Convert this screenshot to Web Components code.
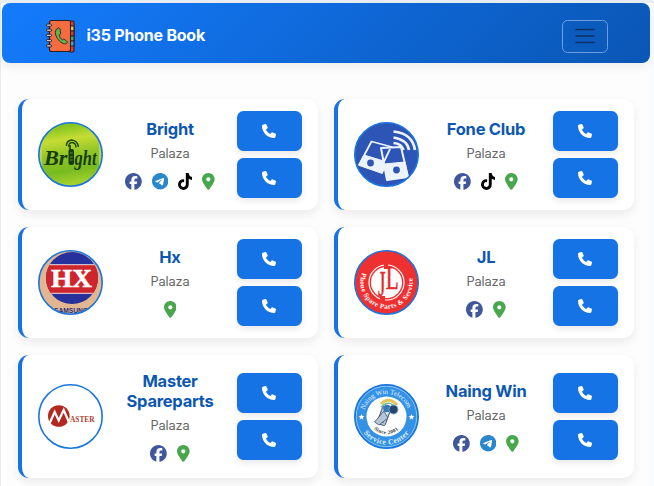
<!DOCTYPE html>
<html lang="en">
<head>
<meta charset="utf-8">
<title>i35 Phone Book</title>
<style>
html,body{margin:0;height:100%;overflow:hidden}
body{font-family:Inter,"Liberation Sans",sans-serif;background:#fdfefe}
</style>
</head>
<body>
<phone-book-app></phone-book-app>

<template id="app-t">
<style>
:host{display:block;box-sizing:border-box;height:486px;padding:3px 4px 0 2px;background:linear-gradient(#e9eef4 0 3px,transparent 3px),linear-gradient(90deg,#e6ebf0 0 1px,#fdfdfe 1px 651px,#f8fcfe 651px)}
.grid{display:grid;grid-template-columns:300px 300px;grid-template-rows:111px 111px 123px;gap:17px 16px;padding:36px 16px 0}
</style>
<app-bar>i35 Phone Book</app-bar>
<div class="grid">
<shop-card links="facebook telegram tiktok pin"><shop-logo slot="logo" kind="bright"></shop-logo>Bright</shop-card>
<shop-card links="facebook tiktok pin"><shop-logo slot="logo" kind="fone"></shop-logo>Fone Club</shop-card>
<shop-card links="pin"><shop-logo slot="logo" kind="hx"></shop-logo>Hx</shop-card>
<shop-card links="facebook pin"><shop-logo slot="logo" kind="jl"></shop-logo>JL</shop-card>
<shop-card links="facebook pin"><shop-logo slot="logo" kind="master"></shop-logo>Master Spareparts</shop-card>
<shop-card links="facebook telegram pin"><shop-logo slot="logo" kind="naing"></shop-logo>Naing Win</shop-card>
</div>
</template>

<template id="bar-t">
<style>
:host{display:flex;align-items:center;box-sizing:border-box;height:60px;padding:0 42px 0 43px;border-radius:8px;background:linear-gradient(135deg,#147bfd,#0a56b4);box-shadow:0 4px 10px rgba(0,0,0,.07);color:#fff}
.book{width:31px;height:34px;margin-top:6px;flex:none}
.title{flex:1;margin:4px 0 0 10.500px;font-size:16px;font-weight:700;line-height:20px;letter-spacing:-.22px;white-space:nowrap}
button{display:flex;align-items:center;justify-content:center;box-sizing:border-box;width:46px;height:33px;margin:6px 0 0;padding:0;border:1px solid #6b9fe0;border-radius:5.5px;background:none}
button svg{width:20px;height:16px}
</style>
<svg class="book" viewBox="0 0 31 34"><g stroke="#2b2020" stroke-width="1.1">
<rect x="24" y="2" width="5" height="31" rx="1.5" fill="#d9402b"/>
<path d="M25 7h4v5h-4z" fill="#f4c542"/><path d="M25 12h4v5h-4z" fill="#d9402b"/><path d="M25 17h4v5h-4z" fill="#3fa877"/><path d="M25 22h4v5h-4z" fill="#4ba3d8"/>
<rect x="4.500" y="1.500" width="21" height="31" rx="2" fill="#f46c40"/>
<g fill="#c6c9d3" stroke-width="1"><rect x="1.500" y="5" width="5" height="2.400" rx="1.200"/><rect x="1.500" y="10" width="5" height="2.400" rx="1.200"/><rect x="1.500" y="15.200" width="5" height="2.400" rx="1.200"/><rect x="1.500" y="20.400" width="5" height="2.400" rx="1.200"/><rect x="1.500" y="25.600" width="5" height="2.400" rx="1.200"/></g>
<path d="M13 9c-3.500 2-3.200 6.600-.6 10.400 2.800 4 6.600 6.600 9.300 4.900.8-.6.7-1.500-.1-2.200l-2-1.600c-.8-.6-1.500-.2-2.200.4-1.600-.8-3.100-3.300-3.100-5.100.9-.3 1.600-.8 1.300-1.800l-.6-3.800c-.2-1-.9-1.600-2-1.200z" fill="#5fb548" stroke-width=".9"/></g></svg>
<div class="title"><slot></slot></div>
<button aria-label="Menu"><svg viewBox="0 0 20 16"><path d="M1 1.500h18M1 8h18M1 14.500h18" stroke="#0f3260" stroke-width="1.500" stroke-linecap="round"/></svg></button>
</template>

<template id="card-t">
<style>
:host{display:flex;align-items:center;box-sizing:border-box;padding:0 16px;border-left:4px solid #1573e6;border-radius:11px;background:#fff;box-shadow:0 4px 10px rgba(0,0,0,.075)}
.info{flex:1;display:flex;flex-direction:column;align-items:center;text-align:center;padding:0 20px}
.name{font-size:16.5px;line-height:20px;font-weight:700;letter-spacing:-.25px;color:#0d57b2}
.place{margin:5px 0 10px;font-size:12.800px;line-height:19px;letter-spacing:-.15px;color:#666}
.links{display:flex;gap:9.700px;height:17px;align-items:center}
.calls{display:flex;flex-direction:column;gap:6.500px}
.calls button{display:flex;align-items:center;justify-content:center;box-sizing:border-box;width:65px;height:40.500px;padding:0 1.500px 0 0;border:0;border-radius:6.500px;background:#1573e6;box-shadow:0 3px 6px rgba(0,0,0,.09);color:#fff}
</style>
<slot name="logo"></slot>
<div class="info"><div class="name"><slot></slot></div><div class="place">Palaza</div><div class="links"></div></div>
<div class="calls"><button aria-label="Call"><app-icon name="phone"></app-icon></button><button aria-label="Call"><app-icon name="phone"></app-icon></button></div>
</template>

<script>
const stamp=(el,id)=>{
  const root=el.attachShadow({mode:'open'});
  root.append(document.getElementById(id).content.cloneNode(true));
  return root;
};

const ICONS={
  phone:['0 0 512 512',14,14,'#fff','M164.9 24.6c-7.7-18.6-28-28.5-47.4-23.2l-88 24C12.1 30.2 0 46 0 64C0 311.4 200.6 512 448 512c18 0 33.8-12.1 38.6-29.5l24-88c5.3-19.4-4.6-39.7-23.2-47.4l-96-40c-16.3-6.8-35.2-2.1-46.3 11.6L304.7 368C234.3 334.7 177.3 277.7 144 207.3L193.3 167c13.7-11.2 18.4-30 11.6-46.3l-40-96z'],
  pin:['0 0 384 512',12.7,16.9,'#48a64c','M215.7 499.2C267 435 384 279.4 384 192C384 86 298 0 192 0S0 86 0 192c0 87.4 117 243 168.3 307.2c12.3 15.3 35.1 15.3 47.4 0zM192 128a64 64 0 1 1 0 128 64 64 0 1 1 0-128z'],
  facebook:['0 0 512 512',16.8,16.8,'#40589b','M512 256C512 114.6 397.4 0 256 0S0 114.6 0 256C0 376 82.7 476.8 194.2 504.5V334.2H141.4V256h52.8V222.3c0-87.1 39.4-127.5 125-127.5c16.2 0 44.2 3.2 55.7 6.4V172c-6-.6-16.5-1-29.6-1c-42 0-58.2 15.9-58.2 57.2V256h83.6l-14.4 78.2H287V510.1C413.8 494.8 512 386.9 512 256z'],
  telegram:['0 8 496 496',16.4,16.4,'#2a87cc','M248 8C111 8 0 119 0 256S111 504 248 504 496 393 496 256 385 8 248 8zM363 176.7c-3.7 39.2-19.9 134.4-28.1 178.3-3.5 18.6-10.3 24.8-16.9 25.400-14.400 1.300-25.300-9.500-39.300-18.700-21.800-14.300-34.200-23.200-55.300-37.200-24.500-16.100-8.600-25 5.300-39.500 3.700-3.800 67.100-61.500 68.300-66.700 .2-.7 .3-3.100-1.200-4.400s-3.600-.8-5.100-.5q-3.300 .7-104.600 69.100-14.800 10.200-26.900 9.900c-8.900-.2-25.900-5-38.600-9.100-15.500-5-27.900-7.700-26.800-16.300q.8-6.700 18.500-13.700 108.400-47.200 144.600-62.300c68.900-28.600 83.200-33.600 92.500-33.800 2.100 0 6.600 .5 9.600 2.900a10.500 10.500 0 0 1 3.500 6.700A43.800 43.800 0 0 1 363 176.700z'],
  tiktok:['0 0 448 512',14.8,16.9,'#050505','M448 209.9a210.100 210.100 0 0 1 -122.800-39.300V349.400A162.600 162.600 0 1 1 185 188.300V278.200a74.600 74.600 0 1 0 52.200 71.200V0l88 0a121.200 121.200 0 0 0 1.900 22.200h0A122.200 122.200 0 0 0 381 102.400a121.400 121.400 0 0 0 67 20.100z']
};

customElements.define('app-icon',class extends HTMLElement{
  connectedCallback(){
    if(this.shadowRoot)return;
    const [box,w,h,color,d]=ICONS[this.getAttribute('name')];
    this.attachShadow({mode:'open'}).innerHTML=`<style>:host{display:block;flex:none;width:${w}px;height:${h}px}svg{display:block;width:100%;height:100%}</style><svg viewBox="${box}"><path fill="${color}" d="${d}"/></svg>`;
  }
});

// Each drawing uses a 65-unit square; the shared ring is painted on top.
const LOGOS={
bright:`<defs><linearGradient id="g" x2=".15" y2="1"><stop offset="0" stop-color="#70b820"/><stop offset=".15" stop-color="#8dc824"/><stop offset=".32" stop-color="#c6dc35"/><stop offset=".55" stop-color="#93c626"/><stop offset=".8" stop-color="#78bb20"/><stop offset="1" stop-color="#a4d02e"/></linearGradient></defs>
<rect width="65" height="65" fill="url(#g)"/><path d="M1 0h3v65H1zM61 0h3v65h-3z" fill="#c9de8a" opacity=".6"/>
<g font-family="Liberation Serif,serif" font-weight="700" font-style="italic" fill="#173c0c"><text x="6" y="43" font-size="21" textLength="23.500" lengthAdjust="spacingAndGlyphs">Br</text><text x="36.500" y="43" font-size="21" textLength="22" lengthAdjust="spacingAndGlyphs">ght</text></g>
<rect x="30.500" y="27" width="5.500" height="16" rx="2" fill="#173c0c"/><path d="M32 23v5" stroke="#173c0c" stroke-width="1.600"/><path d="M32 31h2.600m-2.600 4h2.600m-2.600 3h2.600" stroke="#72a833" stroke-width=".8"/>
<g fill="none" stroke="#234d12" stroke-width="1.500"><path d="M31 25q-1-4 3-4.500q4 .5 4 5M28.500 24q-.5-5 5-6q6 .5 7 7"/></g>`,
fone:`<rect width="65" height="65" fill="#2c55b5"/>
<g fill="none" stroke="#edf3fb" stroke-linejoin="round"><path d="M17.500 19.500L38 25 28 51 5 43z" stroke-width="1.800"/><path d="M10 33l23 7-5 11-23-8z" fill="#edf3fb"/><circle cx="16.500" cy="41" r="3.400" fill="#2c55b5" stroke="none"/>
<path d="M27 26l20-1 7 30-21 3z" fill="#2c55b5" stroke-width="2"/><path d="M30 42l21-2 3 15-21 3z" fill="#edf3fb"/><circle cx="42.500" cy="48" r="3.400" fill="#2c55b5" stroke="none"/>
<path d="M36 27L25 50" stroke-width="1.800"/>
<path d="M39.500 9.500q19 2 21.500 18.500M39.500 15.500q13.500 2 15.500 12.500M39.500 21q8 .5 10 7" stroke-width="2.700"/></g>`,
hx:`<rect width="65" height="65" fill="#e1b691"/><clipPath id="h"><circle cx="34" cy="28" r="26"/></clipPath><g clip-path="url(#h)"><rect width="65" height="65" fill="#26319b"/><rect y="15" width="65" height="28.500" fill="#cf252c"/><path d="M0 14.700h65M0 43.300h65" stroke="#f1ded8"/></g>
<text x="13" y="37" font-family="Liberation Serif,serif" font-weight="700" font-size="25" fill="#fff" stroke="#fff" stroke-width=".5" textLength="41" lengthAdjust="spacingAndGlyphs">HX</text>
<text x="16" y="62.500" font-family="Liberation Sans,sans-serif" font-weight="700" font-size="6.800" fill="#263178" textLength="34" lengthAdjust="spacingAndGlyphs">SAMSUNG</text>`,
jl:`<rect width="65" height="65" fill="#ee3030"/><circle cx="32.500" cy="32.500" r="17.500" fill="#ee3030" stroke="#fff" stroke-width="1.200"/><circle cx="32.500" cy="32.500" r="15.500" fill="#fff"/><path d="M30 13h4v6h-4zM26 46h5v5h-5z" fill="#ee3030"/>
<g font-family="Liberation Serif,serif" fill="#e52b2c" stroke="#e52b2c" stroke-width=".6"><text x="24" y="46" font-size="36" textLength="7.500" lengthAdjust="spacingAndGlyphs">J</text><text x="31.700" y="39" font-size="33" textLength="13" lengthAdjust="spacingAndGlyphs">L</text></g>
<path id="j" d="M8.300 22.500A26.200 26.200 0 1 0 56.700 22.500" fill="none"/><text font-family="Liberation Serif,serif" font-weight="700" font-size="7" fill="#fff"><textPath href="#j" textLength="97">Phone Spare Parts &amp; Service</textPath></text>`,
master:`<rect width="65" height="65" fill="#fff"/><circle cx="20.800" cy="32" r="10.800" fill="#b3281f"/>
<path d="M11.500 39.500l5.200-11.500 4 8.500 5-10.500 6 14" fill="none" stroke="#fff" stroke-width="2.200"/>
<text x="32" y="38" font-family="Liberation Serif,serif" font-weight="700" font-size="8.500" fill="#a9432f" textLength="24.500" lengthAdjust="spacingAndGlyphs">ASTER</text>`,
naing:`<rect width="65" height="65" fill="#3391e6"/><circle cx="32.500" cy="32.500" r="30.300" fill="none" stroke="#a8d3f5" stroke-width=".8"/><circle cx="32.500" cy="32.500" r="20" fill="#fff"/>
<path id="n" d="M10.500 27A22.700 22.700 0 0 1 54.500 27" fill="none"/><path id="s" d="M8.500 47A28 28 0 0 0 56.500 47" fill="none"/><path id="y" d="M18.500 43.500A18 18 0 0 0 46.500 43.500" fill="none"/>
<g font-family="Liberation Serif,serif"><text font-size="7" fill="#e0f1fc"><textPath href="#n" startOffset="1" textLength="56">Naing Win Telecom</textPath></text><text font-size="7.600" font-weight="700" fill="#e0f1fc"><textPath href="#s" startOffset="2" textLength="53">Service Center</textPath></text><text font-size="5.300" font-weight="700" fill="#333"><textPath href="#y" startOffset="2" textLength="27">Since 2001</textPath></text></g>
<path d="M27 20q8-8 16 1" fill="none" stroke="#e2c65a" stroke-width="3"/><path d="M27 23q8-8 15 1" fill="none" stroke="#70bd9b" stroke-width="1.400"/>
<g transform="rotate(20 30 31)"><rect x="26" y="23" width="8.500" height="18" rx="1.500" fill="#c3d3df" stroke="#283c59" stroke-width=".8"/><path d="M28 24.500h5v9h-5z" fill="#e8f4fb"/><path d="M28 36h5m-5 2.500h5" stroke="#5b7391" stroke-width=".8"/></g>
<path d="M20.500 38l9.500-11 4 7-9 7z" fill="#b4c6d4" stroke="#263c60" stroke-width=".7"/><circle cx="33" cy="24.500" r="3.800" fill="#357bb7"/><circle cx="39.500" cy="25.500" r="4.500" fill="#27466b" stroke="#70aad3"/>
<g fill="#fff" stroke="#1f5a9a" stroke-width=".3"><path id="st" d="M7.500 29.500l1 2.200 2.300.2-1.700 1.600.6 2.400-2.200-1.200-2.200 1.200.6-2.400-1.700-1.600 2.300-.2z"/><use href="#st" x="50"/></g>`
};

customElements.define('shop-logo',class extends HTMLElement{
  connectedCallback(){
    if(this.shadowRoot)return;
    this.attachShadow({mode:'open'}).innerHTML=`<style>:host{display:block;flex:none;width:65px;height:65px}svg{display:block;width:65px;height:65px}</style><svg viewBox="0 0 65 65"><clipPath id="c"><circle cx="32.5" cy="32.5" r="32"/></clipPath><g clip-path="url(#c)">${LOGOS[this.getAttribute('kind')]}</g><circle cx="32.5" cy="32.5" r="31.700" fill="none" stroke="#1b75df" stroke-width="1.600"/></svg>`;
  }
});

customElements.define('app-bar',class extends HTMLElement{
  constructor(){super();stamp(this,'bar-t');}
});

customElements.define('shop-card',class extends HTMLElement{
  connectedCallback(){
    if(this.shadowRoot)return;
    const links=stamp(this,'card-t').querySelector('.links');
    for(const name of this.getAttribute('links').split(' ')){
      const icon=document.createElement('app-icon');
      icon.setAttribute('name',name);
      links.append(icon);
    }
  }
});

customElements.define('phone-book-app',class extends HTMLElement{
  constructor(){super();stamp(this,'app-t');}
});
</script>
</body>
</html>
